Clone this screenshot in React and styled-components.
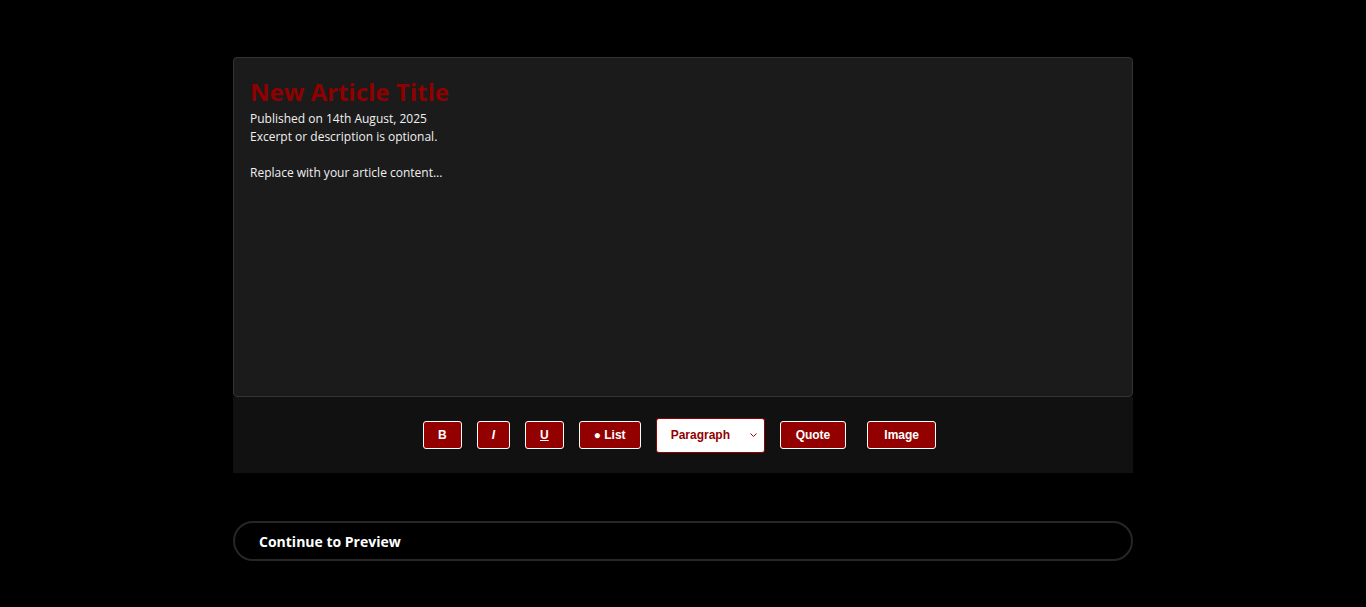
import styled, { createGlobalStyle } from 'styled-components';

const GlobalStyle = createGlobalStyle`
	html, body {
		margin: 0;
		padding: 0;
		background: #000000;
		font-family: 'Open Sans', 'Liberation Sans', sans-serif;
		color: #eeeeee;
	}
`;

const Page = styled.div`
	width: 900px;
	margin: 0 auto;
	padding-top: 57px;
`;

const Editor = styled.div`
	height: 340px;
	box-sizing: border-box;
	background: #1b1b1b;
	border: 1px solid #333333;
	border-radius: 4px;
	padding: 16px;
`;

const Title = styled.h1`
	margin: 3px 0 3px;
	font-size: 24px;
	line-height: 30px;
	font-weight: 700;
	color: #8f0000;
`;

const Line = styled.p`
	margin: 0;
	font-size: 12px;
	line-height: 18px;
	color: #f0f0f0;
	min-height: 18px;
`;

const Toolbar = styled.div`
	height: 76px;
	box-sizing: border-box;
	padding-right: 7px;
	background: #111111;
	display: flex;
	align-items: center;
	justify-content: center;
	gap: 15px;
`;

const ToolButton = styled.button`
	height: 28px;
	padding: 0 ${(p) => p.$pad || 14}px;
	box-sizing: border-box;
	background: #930000;
	color: #ffffff;
	border: 1px solid #ffffff;
	border-radius: 3px;
	font-family: 'Liberation Sans', Arial, sans-serif;
	font-size: 12px;
	font-weight: 700;
	font-style: ${(p) => (p.$italic ? 'italic' : 'normal')};
	text-decoration: ${(p) => (p.$underline ? 'underline' : 'none')};
	margin-left: ${(p) => p.$offset || 0}px;
	cursor: pointer;
`;

const SelectBox = styled.div`
	position: relative;
	width: 109px;
	height: 35px;
	box-sizing: border-box;
	background: #ffffff;
	border: 1px solid #930000;
	border-radius: 3px;
	display: flex;
	align-items: center;
	padding-left: 14px;
	color: #930000;
	font-family: 'Liberation Sans', Arial, sans-serif;
	font-size: 12px;
	font-weight: 700;

	svg {
		position: absolute;
		right: 7px;
		top: 14px;
	}
`;

const ContinueButton = styled.button`
	display: block;
	width: 100%;
	height: 40px;
	margin-top: 48px;
	box-sizing: border-box;
	background: #000000;
	border: 2px solid #262626;
	border-radius: 20px;
	padding: 0 0 0 24px;
	text-align: left;
	color: #ffffff;
	font-family: 'Open Sans', sans-serif;
	font-size: 14px;
	font-weight: 700;
	cursor: pointer;
`;

export default function App() {
	return (
		<>
			<GlobalStyle />
			<Page>
				<Editor>
					<Title>New Article Title</Title>
					<Line>Published on 14th August, 2025</Line>
					<Line>Excerpt or description is optional.</Line>
					<Line />
					<Line>Replace with your article content...</Line>
				</Editor>
				<Toolbar>
					<ToolButton>B</ToolButton>
					<ToolButton $italic>I</ToolButton>
					<ToolButton $underline>U</ToolButton>
					<ToolButton>● List</ToolButton>
					<SelectBox>
						Paragraph
						<svg width="7" height="5" viewBox="0 0 7 5">
							<path d="M0.5 0.5 L3.5 3.5 L6.5 0.5" fill="none" stroke="#930000" strokeWidth="1" />
						</svg>
					</SelectBox>
					<ToolButton $pad={15}>Quote</ToolButton>
					<ToolButton $pad={16} $offset={6}>Image</ToolButton>
				</Toolbar>
				<ContinueButton>Continue to Preview</ContinueButton>
			</Page>
		</>
	);
}
